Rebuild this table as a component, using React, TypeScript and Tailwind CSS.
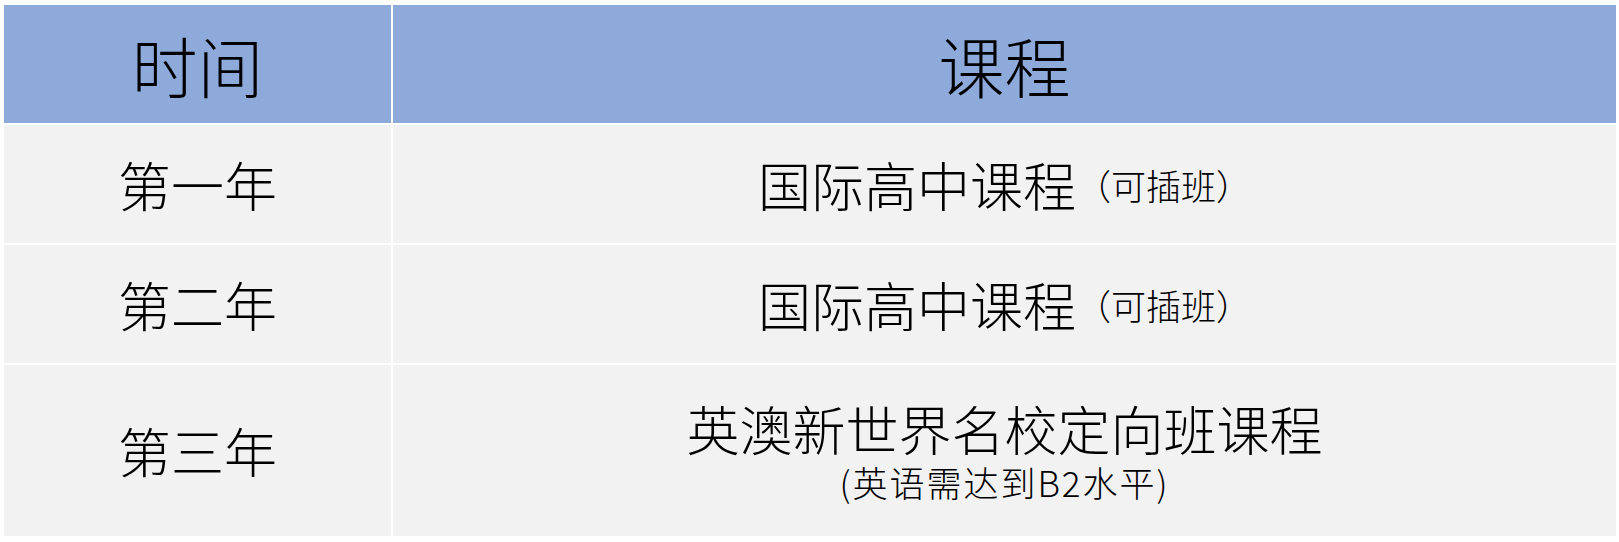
import React from "react";

const font = { fontFamily: '"Noto Sans CJK SC", "Noto Sans", sans-serif' };

export default function App() {
  const cell = "flex items-center justify-center bg-[#f2f2f2] text-black font-light";
  const head = "flex items-center justify-center bg-[#8eaadb] text-black text-[66px] leading-none font-light";
  return (
    <div className="w-[1619px] h-[542px] bg-white" style={font}>
      <div className="grid grid-cols-[387px_1223px] grid-rows-[118px_118px_118px_171px] gap-[2px] pt-[5px] pl-[4px]">
        <div className={head}>时间</div>
        <div className={head}>课程</div>

        <div className={`${cell} text-[53px] leading-none`}>第一年</div>
        <div className={`${cell} leading-none`}>
          <span className="text-[53px]">国际高中课程</span>
          <span className="text-[35px]">（可插班）</span>
        </div>

        <div className={`${cell} text-[53px] leading-none`}>第二年</div>
        <div className={`${cell} leading-none`}>
          <span className="text-[53px]">国际高中课程</span>
          <span className="text-[35px]">（可插班）</span>
        </div>

        <div className={`${cell} text-[53px] leading-none`}>第三年</div>
        <div className={`${cell} flex-col leading-none`}>
          <div className="text-[53px] leading-[53px]">英澳新世界名校定向班课程</div>
          <div className="mt-[9px] text-[35px] leading-[35px] tracking-[2px]">(英语需达到B2水平)</div>
        </div>
      </div>
    </div>
  );
}
